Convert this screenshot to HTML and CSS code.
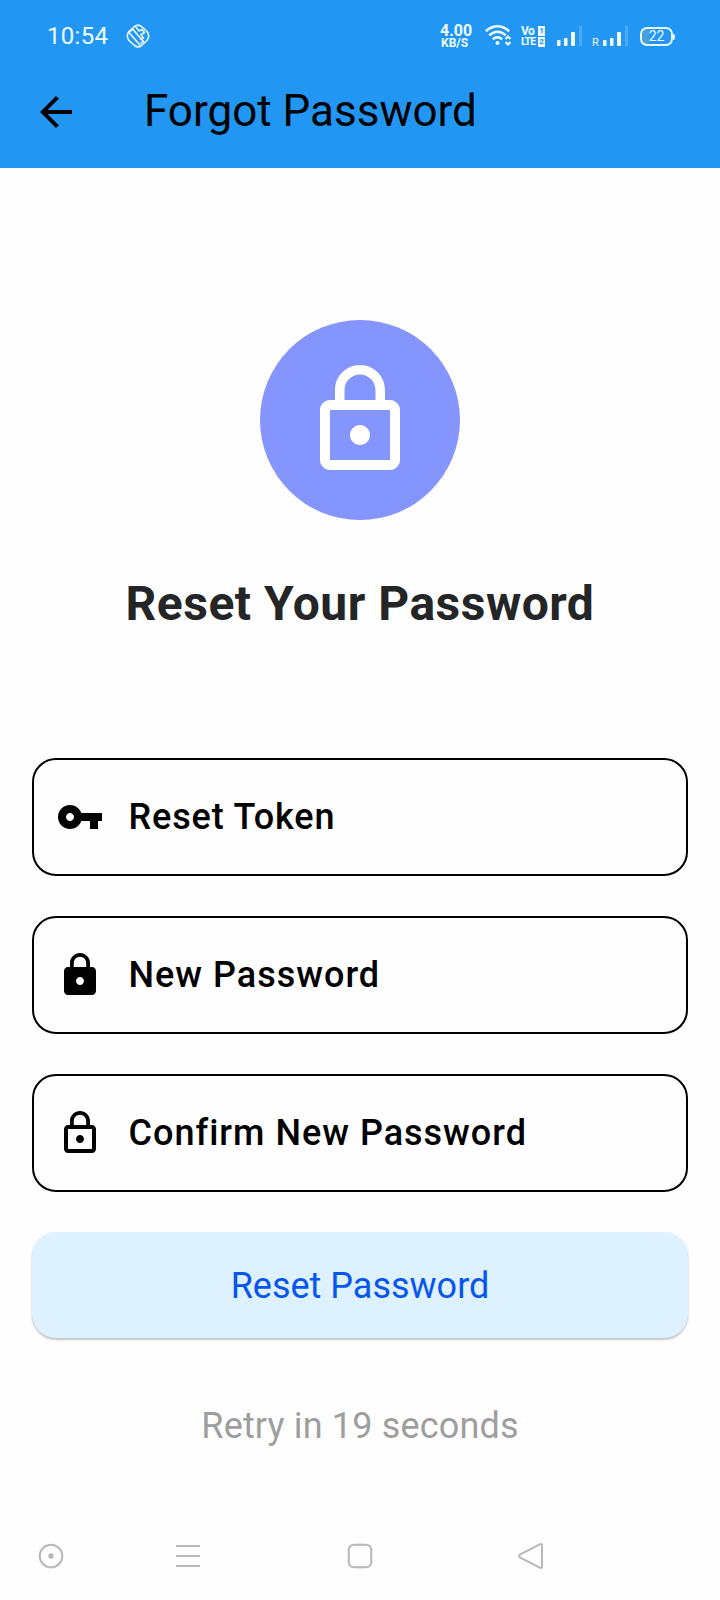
FILE: index.html
```html
<!DOCTYPE html>
<html lang="en">
<head>
<meta charset="utf-8">
<title>Forgot Password</title>
<link rel="stylesheet" href="styles.css">
</head>
<body>
<header class="top">
  <div class="status">
    <span class="clock">10:54</span>
    <svg class="badge" width="24" height="24" viewBox="0 0 24 24" fill="none" stroke="currentColor" stroke-width="1.6" stroke-linejoin="round" stroke-linecap="round"><path d="M8.500 2.500Q12-.2 15.500 2.500L21 7.500Q24.400 12 21 16.500L15.500 21.500Q12 24.200 8.500 21.500L3 16.500Q-.4 12 3 7.500Z"/><path d="M3 8.500L13.500 20.500M6.500 5L17.500 17.500L15 19M6.500 5L3.500 8M10 3L13 7L16 5.500L18.500 8.500L15 10.500L17.500 14L14.500 15"/></svg>
    <span class="rate"><b>4.00</b><b class="unit">KB/S</b></span>
    <svg class="wifi" width="28" height="22" viewBox="0 0 28 22" fill="none" stroke="currentColor" stroke-width="2.500"><path d="M.8 6.200Q12.500-3.700 24.200 6.200M4.300 10.300Q12.500 3.300 20.700 10.300M7.800 14.200Q12.500 10.200 17.200 14.200"/><circle cx="12.500" cy="18" r="2" fill="currentColor" stroke="none"/><path d="M20.500 14L23 11.500L25.500 14M20.500 17L23 19.500L25.500 17" stroke-width="2"/></svg>
    <span class="volte"><span class="vrow"><span>Vo</span><i>1</i></span><span class="vrow"><span class="lte">LTE</span><i>2</i></span></span>
    <svg class="sig1" width="26" height="20" viewBox="0 0 26 20" fill="currentColor"><rect x="0" y="14" width="3.500" height="6" rx=".8"/><rect x="7" y="12" width="3.500" height="8" rx=".8"/><rect x="14" y="6" width="4" height="14" rx=".8"/><rect x="22" y="0" width="3" height="20" opacity=".2"/></svg>
    <span class="roam">R</span>
    <svg class="sig2" width="26" height="20" viewBox="0 0 26 20" fill="currentColor"><rect x="0" y="14" width="3.500" height="6" rx=".8"/><rect x="7" y="12" width="3.500" height="8" rx=".8"/><rect x="14" y="6" width="4" height="14" rx=".8"/><rect x="22" y="0" width="3" height="20" opacity=".2"/></svg>
    <span class="battery">22</span>
  </div>
  <div class="appbar">
    <svg width="48" height="48" viewBox="0 0 24 24"><path d="M20 11H7.830l5.590-5.590L12 4l-8 8 8 8 1.410-1.410L7.830 13H20v-2z"/></svg>
    <h1 class="title">Forgot Password</h1>
  </div>
</header>
<main class="content">
  <div class="avatar">
    <svg width="120" height="120" viewBox="0 0 24 24" fill="#fff"><path d="M12 17c1.100 0 2-.9 2-2s-.9-2-2-2-2 .9-2 2 .9 2 2 2zm6-9h-1V6c0-2.760-2.240-5-5-5S7 3.240 7 6v2H6c-1.100 0-2 .9-2 2v10c0 1.100.9 2 2 2h12c1.100 0 2-.9 2-2V10c0-1.100-.9-2-2-2zM8.900 6c0-1.710 1.390-3.100 3.100-3.100s3.100 1.390 3.100 3.100v2H8.900V6zM18 20H6V10h12v10z"/></svg>
  </div>
  <h2 class="heading">Reset Your Password</h2>
  <form class="form">
    <label class="field">
      <svg width="48" height="48" viewBox="0 0 24 24"><path d="M12.650 10C11.830 7.670 9.610 6 7 6c-3.310 0-6 2.690-6 6s2.690 6 6 6c2.610 0 4.830-1.670 5.650-4H17v4h4v-4h2v-4H12.650zM7 14c-1.100 0-2-.9-2-2s.9-2 2-2 2 .9 2 2-.9 2-2 2z"/></svg>
      <span class="token">Reset Token</span>
    </label>
    <label class="field">
      <svg width="48" height="48" viewBox="0 0 24 24"><path d="M18 8h-1V6c0-2.760-2.240-5-5-5S7 3.240 7 6v2H6c-1.100 0-2 .9-2 2v10c0 1.100.9 2 2 2h12c1.100 0 2-.9 2-2V10c0-1.100-.9-2-2-2zm-6 9c-1.100 0-2-.9-2-2s.9-2 2-2 2 .9 2 2-.9 2-2 2zm3.100-9H8.900V6c0-1.710 1.390-3.100 3.100-3.100s3.100 1.390 3.100 3.100v2z"/></svg>
      <span>New Password</span>
    </label>
    <label class="field">
      <svg width="48" height="48" viewBox="0 0 24 24"><path d="M12 17c1.100 0 2-.9 2-2s-.9-2-2-2-2 .9-2 2 .9 2 2 2zm6-9h-1V6c0-2.760-2.240-5-5-5S7 3.240 7 6v2H6c-1.100 0-2 .9-2 2v10c0 1.100.9 2 2 2h12c1.100 0 2-.9 2-2V10c0-1.100-.9-2-2-2zM8.900 6c0-1.710 1.390-3.100 3.100-3.100s3.100 1.390 3.100 3.100v2H8.900V6zM18 20H6V10h12v10z"/></svg>
      <span>Confirm New Password</span>
    </label>
    <button class="submit" type="button">Reset Password</button>
  </form>
  <p class="retry">Retry in 19 seconds</p>
</main>
<nav class="nav">
  <svg class="nav-assist" width="28" height="28" viewBox="0 0 28 28"><circle cx="14" cy="14" r="11.300"/><circle cx="14" cy="14" r="2.700" fill="#b8b8b8" stroke="none"/></svg>
  <svg class="nav-menu" width="28" height="28" viewBox="0 0 28 28"><path d="M2 4H26M2 14H26M2 24H26"/></svg>
  <svg class="nav-home" width="28" height="28" viewBox="0 0 28 28"><rect x="2.800" y="2.800" width="22.400" height="22.400" rx="5"/></svg>
  <svg width="28" height="28" viewBox="0 0 28 28"><path d="M22.700 2.300Q25 1.300 25 4V24Q25 26.700 22.700 25.700L3.200 15.600Q.8 14 3.200 12.400Z"/></svg>
</nav>
</body>
</html>
```
FILE: styles.css
```css
* { box-sizing: border-box; }
body {
  margin: 0;
  height: 1600px;
  display: flex;
  flex-direction: column;
  background: #fefefe;
  color: #000;
  font-family: Roboto, sans-serif;
}
svg { display: block; flex: none; }
h1, h2, p { margin: 0; }

.top { height: 168px; background: #2196f3; }
.status {
  height: 72px;
  padding-left: 47px;
  display: flex;
  align-items: center;
  color: #f0fbff;
}
.clock { width: 79px; font-size: 24px; line-height: 28px; letter-spacing: 0.3px; }
.badge { margin-right: 290px; }
.rate { width: 45px; display: flex; flex-direction: column; align-items: flex-start; font-size: 16px; line-height: 13px; }
.rate b { white-space: nowrap; }
.rate .unit { padding-left: 1px; font-size: 12px; line-height: 12px; }
.wifi { margin-right: 8px; }
.volte { width: 36px; display: flex; flex-direction: column; gap: 1px; font: bold 12px/10px Roboto, sans-serif; letter-spacing: -0.5px; }
.vrow { width: 24px; height: 10px; display: flex; justify-content: space-between; }
.vrow span { width: 16px; }
.vrow .lte { font-size: 10.5px; letter-spacing: -0.9px; }
.vrow i { width: 7px; background: #f0fbff; color: #2196f3; font: bold 8px/10px Roboto, sans-serif; text-align: center; letter-spacing: 0; }
.sig1 { margin-right: 9px; }
.roam { width: 11px; padding-top: 13px; font-size: 11px; line-height: 12px; }
.sig2 { margin-right: 11px; }
.battery {
  position: relative;
  width: 33px;
  height: 19px;
  border: 2px solid #e6f7ff;
  border-radius: 7px;
  background: linear-gradient(90deg, #4a9fdd 25%, transparent 25%);
  font-size: 14px;
  line-height: 15px;
  text-align: center;
}
.battery::after {
  content: "";
  position: absolute;
  right: -4px;
  top: 5px;
  width: 2px;
  height: 6px;
  border-radius: 0 2px 2px 0;
  background: #e6f7ff;
}

.appbar { height: 80px; padding-left: 32px; display: flex; align-items: center; gap: 64px; }
.title { padding-bottom: 3px; font-size: 44px; font-weight: 400; line-height: 52px; }

.content { flex: 1; padding: 152px 32px 0; }
.avatar {
  width: 200px;
  height: 200px;
  margin: 0 auto;
  display: flex;
  align-items: center;
  justify-content: center;
  border-radius: 50%;
  background: #8495fe;
}
.heading { margin-top: 56px; font-size: 48px; line-height: 56px; font-weight: 700; letter-spacing: 0.5px; text-align: center; color: #232527; }
.form { margin-top: 126px; display: flex; flex-direction: column; gap: 40px; }
.field {
  height: 118px;
  padding-left: 22px;
  display: flex;
  align-items: center;
  gap: 24.5px;
  border: 2px solid #000;
  border-radius: 24px;
  font-size: 36px;
  font-weight: 500;
  line-height: 42px;
  letter-spacing: 1px;
}
.token { letter-spacing: 0.85px; }
.submit {
  height: 106px;
  padding: 2px 0 0;
  border: 0;
  border-radius: 24px;
  background: #ddf1fe;
  box-shadow: 0 2px 2px rgba(0, 0, 0, .2), 0 1px 3px rgba(0, 0, 0, .06);
  color: #0756ef;
  font: 400 36px/42px Roboto, sans-serif;
}
.retry { margin-top: 67px; font-size: 36px; line-height: 42px; letter-spacing: 0.16px; text-align: center; color: #9e9e9e; }

.nav { height: 88px; padding-left: 37px; display: flex; align-items: center; fill: none; stroke: #b8b8b8; stroke-width: 2; }
.nav-assist { margin-right: 109px; }
.nav-menu { margin-right: 144px; }
.nav-home { margin-right: 143px; }
```
